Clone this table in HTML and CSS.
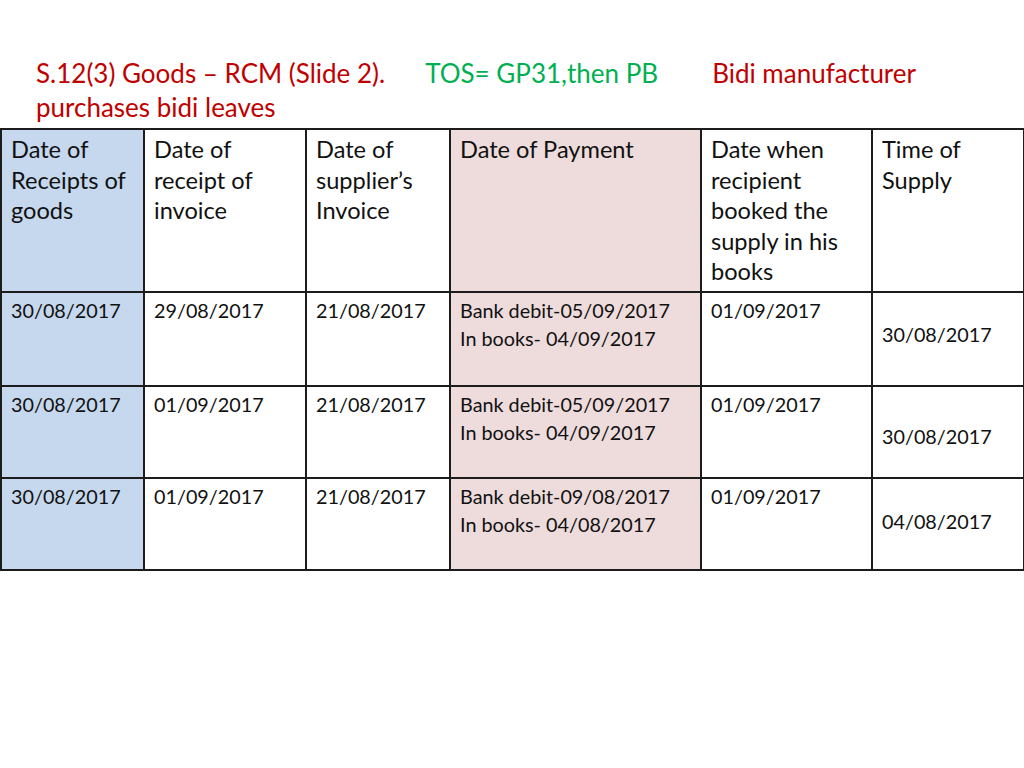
FILE: index.html
```html
<!DOCTYPE html>
<html>
<head>
<meta charset="utf-8">
<link rel="stylesheet" href="styles.css">
</head>
<body>
<div class="slide">
  <h1 class="title">
    <span class="red">S.12(3) Goods – RCM (Slide 2).</span><span class="green gap1">TOS= GP31,then PB</span><span class="red gap2">Bidi manufacturer</span><br>
    <span class="red">purchases bidi leaves</span>
  </h1>
  <table class="grid">
    <colgroup>
      <col class="c1"><col class="c2"><col class="c3"><col class="c4"><col class="c5"><col class="c6">
    </colgroup>
    <thead>
      <tr class="head">
        <th class="blue">Date of Receipts of goods</th>
        <th>Date of receipt of invoice</th>
        <th>Date of supplier’s Invoice</th>
        <th class="pink">Date of Payment</th>
        <th>Date when recipient booked the supply in his books</th>
        <th>Time of Supply</th>
      </tr>
    </thead>
    <tbody>
      <tr class="r1">
        <td class="blue">30/08/2017</td>
        <td>29/08/2017</td>
        <td>21/08/2017</td>
        <td class="pink">Bank debit-05/09/2017<br>In books- 04/09/2017</td>
        <td>01/09/2017</td>
        <td class="tos t1">30/08/2017</td>
      </tr>
      <tr class="r2">
        <td class="blue">30/08/2017</td>
        <td>01/09/2017</td>
        <td>21/08/2017</td>
        <td class="pink">Bank debit-05/09/2017<br>In books- 04/09/2017</td>
        <td>01/09/2017</td>
        <td class="tos t2">30/08/2017</td>
      </tr>
      <tr class="r3">
        <td class="blue">30/08/2017</td>
        <td>01/09/2017</td>
        <td>21/08/2017</td>
        <td class="pink">Bank debit-09/08/2017<br>In books- 04/08/2017</td>
        <td>01/09/2017</td>
        <td class="tos t3">04/08/2017</td>
      </tr>
    </tbody>
  </table>
</div>
</body>
</html>
```
FILE: styles.css
```css
html, body {
  margin: 0;
  padding: 0;
  background: #ffffff;
}
body {
  width: 1024px;
  height: 768px;
  overflow: hidden;
  font-family: "Lato", "Liberation Sans", sans-serif;
  color: #111111;
}
.slide {
  padding-top: 56px;
}
.title {
  margin: 0 0 0 36px;
  font-weight: normal;
  font-size: 26px;
  line-height: 34px;
  height: 72px;
  white-space: nowrap;
}
.red { color: #c00000; }
.green { color: #00b050; }
.gap1 { margin-left: 40px; }
.gap2 { margin-left: 54px; }

.grid {
  border-collapse: collapse;
  table-layout: fixed;
  width: 1023px;
}
.c1 { width: 143px; }
.c2 { width: 162px; }
.c3 { width: 144px; }
.c4 { width: 251px; }
.c5 { width: 171px; }
.c6 { width: 152px; }

.grid th, .grid td {
  border: 2px solid #1c1c1c;
  text-align: left;
  vertical-align: top;
  font-weight: normal;
  padding: 5px 8px 0 9px;
}
.grid th {
  font-size: 23.6px;
  line-height: 30.5px;
  height: 157px;
  padding-top: 4px;
}
.grid td {
  font-size: 19.8px;
  line-height: 27.5px;
  padding-top: 4px;
}
.r1 td { height: 88px; }
.r2 td, .r3 td { height: 86px; }
.grid .tos {
  vertical-align: middle;
  padding-top: 0;
  padding-bottom: 0;
}
.grid .tos.t1 { height: 84px; padding-bottom: 8px; }
.grid .tos.t2 { height: 80px; padding-top: 10px; }
.grid .tos.t3 { height: 86px; padding-bottom: 4px; }
.blue { background: #c6d8ee; }
.pink { background: #eedcdc; }
```
